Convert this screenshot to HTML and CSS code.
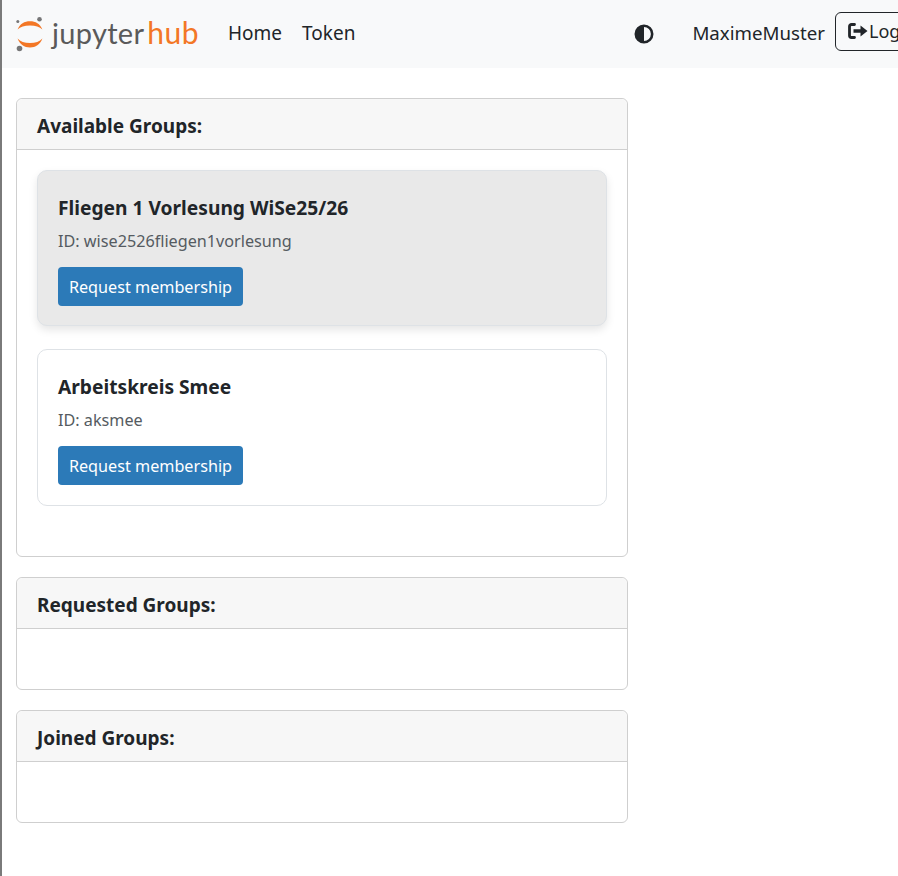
FILE: index.html
```html
<!DOCTYPE html>
<html lang="en">
<head>
    <meta charset="UTF-8">
    <meta name="viewport" content="width=device-width, initial-scale=1.0">
    <title>JupyterHub - Groups</title>
    <link rel="stylesheet" href="styles.css">
</head>
<body>
    <nav class="navbar">
        <a class="brand" href="#">
            <svg class="brand-icon" width="30" height="36" viewBox="0 0 30 36">
                <path d="M2.6 13.6C5 7.6 9.4 5.2 15 5.2s10 2.4 12.4 8.4C24.6 10.8 20.6 9.4 15 9.4S5.400 10.800 2.600 13.600z" fill="#f37726"/>
                <path d="M2.600 22.400C5.400 25.400 9.400 27 15 27s9.600-1.600 12.400-4.600C25 28.600 20.600 31.400 15 31.400S5 28.600 2.600 22.400z" fill="#f37726"/>
                <circle cx="24.500" cy="3.300" r="2.300" fill="#767677"/>
                <circle cx="4.500" cy="32.500" r="2.800" fill="#767677"/>
                <circle cx="2.800" cy="5.500" r="1.500" fill="#767677"/>
            </svg>
            <span class="brand-text">jupyter<span class="brand-hub">hub</span></span>
        </a>
        <div class="nav-links">
            <a href="#">Home</a>
            <a href="#">Token</a>
        </div>
        <div class="nav-right">
            <svg class="theme-icon" width="20" height="20" viewBox="0 0 20 20">
                <circle cx="10" cy="10" r="8.200" fill="none" stroke="#212529" stroke-width="2.600"/>
                <path d="M10 2a8 8 0 0 0 0 16z" fill="#212529"/>
            </svg>
            <span class="user-name">MaximeMuster</span>
            <button class="logout-btn">
                <svg width="20" height="16" viewBox="0 0 20 16">
                    <path d="M6.500 1.500H3.500A2 2 0 0 0 1.500 3.500v9a2 2 0 0 0 2 2h3" fill="none" stroke="#212529" stroke-width="2.800" stroke-linecap="round"/>
                    <path d="M5.500 6.200h7V2.400L19.500 8l-7 5.600V9.800h-7z" fill="#212529"/>
                </svg>
                <span>Logout</span>
            </button>
        </div>
    </nav>

    <main class="content">
        <section class="panel">
            <h2 class="panel-header">Available Groups:</h2>
            <div class="panel-body">
                <div class="group-card group-card-hover">
                    <h3>Fliegen 1 Vorlesung WiSe25/26</h3>
                    <p>ID: wise2526fliegen1vorlesung</p>
                    <button class="request-btn">Request membership</button>
                </div>
                <div class="group-card">
                    <h3>Arbeitskreis Smee</h3>
                    <p>ID: aksmee</p>
                    <button class="request-btn">Request membership</button>
                </div>
            </div>
        </section>

        <section class="panel">
            <h2 class="panel-header">Requested Groups:</h2>
            <div class="panel-body"></div>
        </section>

        <section class="panel">
            <h2 class="panel-header">Joined Groups:</h2>
            <div class="panel-body"></div>
        </section>
    </main>
</body>
</html>
```

FILE: styles.css
```css
* {
    margin: 0;
    padding: 0;
    box-sizing: border-box;
}

html, body {
    height: 100%;
    overflow: hidden;
}

body {
    background-color: #fff;
    border-left: 2px solid #7a7a7a;
    font-family: "Noto Sans", "Open Sans", sans-serif;
    color: #212529;
}

.navbar {
    display: flex;
    align-items: center;
    height: 68px;
    background-color: #f8f9fa;
    padding-left: 13px;
    white-space: nowrap;
}

.brand {
    display: flex;
    align-items: center;
    gap: 7px;
    text-decoration: none;
}

.brand-text {
    font-family: "Lato", sans-serif;
    font-size: 29px;
    color: #5a5a5a;
    letter-spacing: 0.3px;
    position: relative;
    top: -2px;
}

.brand-hub {
    margin-left: 3px;
    font-size: 30px;
    letter-spacing: 0.5px;
    color: #f37726;
}

.nav-links {
    display: flex;
    gap: 20px;
    margin-left: 29px;
    padding-bottom: 2px;
}

.nav-links a {
    color: #212529;
    text-decoration: none;
    font-size: 19px;
}

.nav-right {
    display: flex;
    align-items: center;
    margin-left: 279px;
}

.theme-icon {
    flex: none;
}

.user-name {
    font-size: 18.700px;
    margin-left: 38px;
    position: relative;
    top: -2px;
}

.logout-btn {
    display: flex;
    align-items: center;
    gap: 1px;
    height: 39px;
    margin-left: 10px;
    padding: 0 12px;
    background: transparent;
    border: 1px solid #212529;
    border-radius: 6px;
    font-family: inherit;
    font-size: 18px;
    color: #212529;
    position: relative;
    top: -3px;
}

.content {
    display: flex;
    flex-direction: column;
    gap: 20px;
    width: 612px;
    margin: 30px 0 0 14px;
}

.panel {
    border: 1px solid #cfcfcf;
    border-radius: 6px;
}

.panel-header {
    height: 51px;
    padding-left: 20px;
    background-color: #f7f7f7;
    border-bottom: 1px solid #cfcfcf;
    border-radius: 6px 6px 0 0;
    font-size: 19px;
    font-weight: 700;
    line-height: 54px;
}

.panel-body {
    min-height: 60px;
    padding: 20px 20px 50px;
}

.panel-body:empty {
    padding: 0;
}

.group-card {
    height: 156.250px;
    padding: 25px 20px 0;
    border: 1px solid #dee2e6;
    border-radius: 10px;
    margin-bottom: 23px;
}

.group-card:last-child {
    margin-bottom: 0;
}

.group-card-hover {
    background-color: #e9e9e9;
    box-shadow: 0 4px 8px rgba(0, 0, 0, 0.1);
}

.group-card h3 {
    font-size: 19.200px;
    font-weight: 700;
    line-height: 24px;
}

.group-card p {
    margin-top: 9px;
    font-size: 16.200px;
    line-height: 24px;
    color: #555b61;
}

.request-btn {
    display: block;
    width: 185px;
    height: 39px;
    margin-top: 14px;
    background-color: #2c7ab8;
    border: none;
    border-radius: 4px;
    color: #fff;
    font-family: inherit;
    font-size: 16.200px;
}
```
